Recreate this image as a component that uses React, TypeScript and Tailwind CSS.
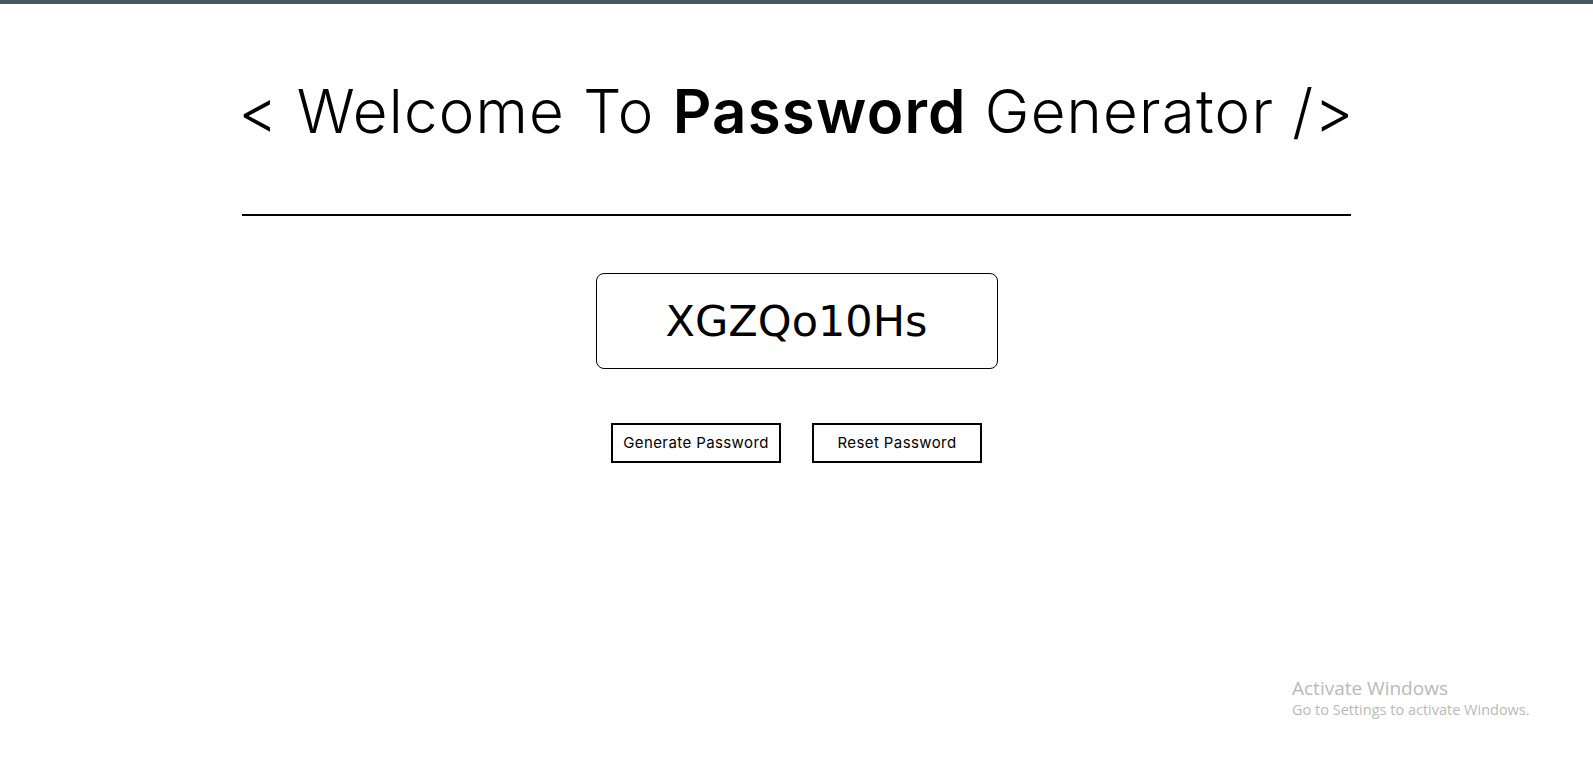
import React, { useState } from "react";

const chars = "ABCDEFGHIJKLMNOPQRSTUVWXYZabcdefghijklmnopqrstuvwxyz0123456789";

const makePassword = () => {
  let out = "";
  for (let i = 0; i < 9; i++) {
    out += chars[Math.floor(Math.random() * chars.length)];
  }
  return out;
};

const App = () => {
  const [password, setPassword] = useState("XGZQo10Hs");

  return (
    <div className="relative min-h-[761px] bg-white text-black font-['Inter',sans-serif]">
      <div className="h-[4px] bg-[#465961]" />

      <div className="flex flex-col items-center">
        <h1 className="mt-[77px] text-[60px] leading-none font-light tracking-[1.2px] whitespace-nowrap">
          &lt; Welcome To <span className="font-semibold">Password</span> Generator /&gt;
        </h1>

        <hr className="mt-[73px] w-[1109px] border-0 border-t-2 border-black" />

        <div className="mt-[57px] w-[402px] h-[96px] rounded-lg border border-black flex items-center justify-center">
          <span className="text-[43px] font-['DejaVu_Sans',sans-serif]">
            {password}
          </span>
        </div>

        <div className="mt-[54px] flex gap-[31px]">
          <button
            onClick={() => setPassword(makePassword())}
            className="w-[170px] h-[40px] border-2 border-black text-[15px] tracking-[0.4px] bg-white"
          >
            Generate Password
          </button>
          <button
            onClick={() => setPassword("")}
            className="w-[170px] h-[40px] border-2 border-black text-[15px] tracking-[0.4px] bg-white"
          >
            Reset Password
          </button>
        </div>
      </div>

      <div className="absolute left-[1292px] top-[677px] text-[#b9b9b9] font-['Open_Sans',sans-serif] pointer-events-none">
        <div className="text-[19px] leading-tight">Activate Windows</div>
        <div className="text-[14.5px] leading-tight">Go to Settings to activate Windows.</div>
      </div>
    </div>
  );
};

export default App;
